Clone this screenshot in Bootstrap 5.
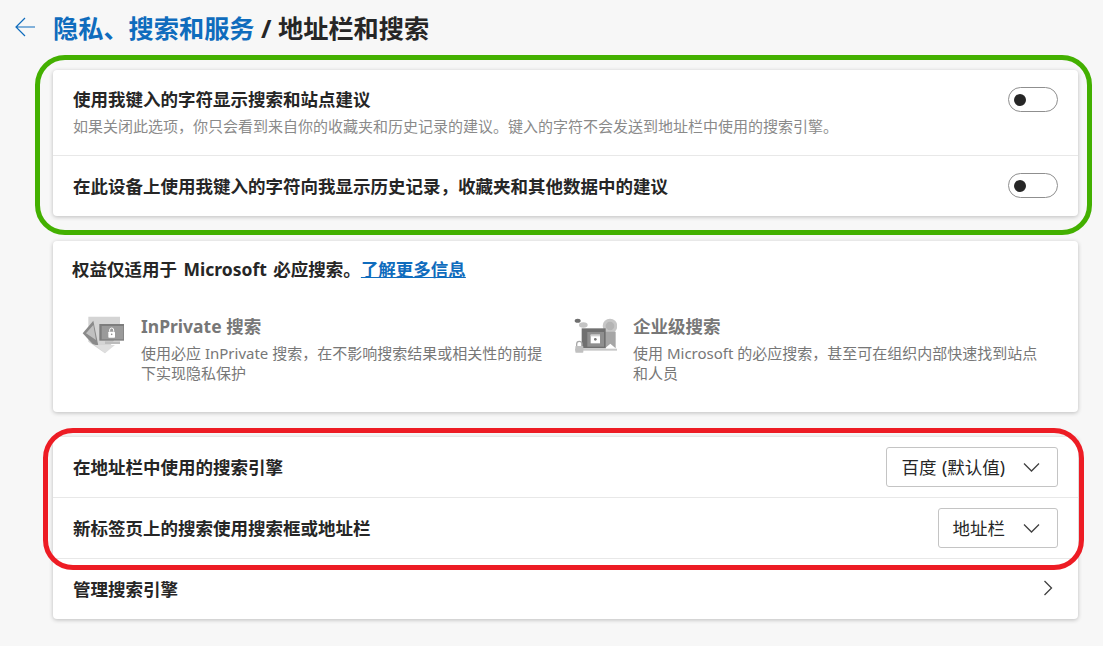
<!DOCTYPE html>
<html lang="zh-CN">
<head>
<meta charset="utf-8">
<title>地址栏和搜索</title>
<link href="https://cdn.jsdelivr.net/npm/bootstrap@5.3.0/dist/css/bootstrap.min.css" rel="stylesheet">
<style>
html,body{height:646px;overflow:hidden}
body{background:#f7f7f7;color:#262626;font-family:"Noto Sans","Noto Sans CJK SC",sans-serif;font-size:15px}
.stage{position:relative;width:1103px;height:646px;padding:0 25px 0 53px}
.head{height:56px;margin-left:-38px;gap:18px}
.head svg{margin-bottom:2px}
.head h1{font-size:25.2px;font-weight:700;line-height:32px;margin:0;color:#262626}
.head h1 a{color:#0f6cbd;text-decoration:none}
.sheet{background:#fff;border-radius:4px;box-shadow:0 1px 4px rgba(0,0,0,.24);width:1025px}
.s1{margin-top:14px;height:146px}
.s2{margin-top:25px;height:171px;padding:15px 19px 0}
.s3{margin-top:25px;height:182px}
.line{padding:0 20px;border-bottom:1px solid #e8e8e8}
.line:last-child{border-bottom:0}
.l1{height:86px;padding-top:16px;align-items:flex-start}
.l1 .tog{margin-top:1px}
.l2{height:60px}
.s1 .l2{padding-bottom:1px}
.l3{height:61px}
.ttl{font-size:17.5px;font-weight:700;line-height:26px}
.sub{font-size:15px;line-height:20px;color:#8a8a8a;margin-top:4px}
.tog{width:50px;height:25px;border:1px solid #8f8f8f;border-radius:13px;background:#fff;padding-left:5px}
.tog i{display:block;width:12px;height:12px;border-radius:50%;background:#262626}
.perk{font-size:17.5px;font-weight:700;line-height:26px;word-spacing:2px}
.perk a{color:#0f6cbd}
.feats{margin-top:32px}
.feat{width:492px;gap:16px;padding-left:8px;color:#777}
.feat svg{flex:none;margin-top:1px}
.feat b{display:block;font-size:17.5px;font-weight:700;line-height:24px;color:#777}
.feat p{font-size:15px;line-height:20px;margin:5px 0 0;color:#777;width:410px}
.pick{height:40px;border:1px solid #c4c4c4;border-radius:3px;background:#fff;font-size:17.5px;color:#262626;padding:0 17px 0 14px;gap:18px;word-spacing:1px}
.go{margin-right:5px;margin-top:-3px}
.ring{position:absolute;border-style:solid;pointer-events:none}
.ring-g{left:35px;top:55px;width:1057px;height:180px;border-width:5px;border-color:#43b000;border-radius:30px}
.ring-r{left:43px;top:428px;width:1041px;height:142px;border-width:5px;border-color:#ed1c24;border-radius:30px}
</style>
</head>
<body>
<div class="stage">
  <div class="head d-flex align-items-center">
    <svg width="20" height="20" viewBox="0 0 20 20" fill="none" stroke="#0f6cbd" stroke-width="1.200"><path d="M20 10H1M10 1 1 10l9 9"/></svg>
    <h1><a href="#">隐私、搜索和服务</a> / 地址栏和搜索</h1>
  </div>

  <div class="sheet s1">
    <div class="line l1 d-flex justify-content-between">
      <div><div class="ttl">使用我键入的字符显示搜索和站点建议</div><div class="sub">如果关闭此选项，你只会看到来自你的收藏夹和历史记录的建议。键入的字符不会发送到地址栏中使用的搜索引擎。</div></div>
      <div class="tog d-flex align-items-center"><i></i></div>
    </div>
    <div class="line l2 d-flex justify-content-between align-items-center">
      <div class="ttl">在此设备上使用我键入的字符向我显示历史记录，收藏夹和其他数据中的建议</div>
      <div class="tog d-flex align-items-center"><i></i></div>
    </div>
  </div>

  <div class="sheet s2">
    <div class="perk">权益仅适用于 Microsoft 必应搜索。<a href="#">了解更多信息</a></div>
    <div class="feats d-flex">
      <div class="feat d-flex">
        <svg width="45" height="40" viewBox="60 45 135 120"><path d="M85 50h95v45l-45 65-50-35z" fill="#d4d4d4"/><path d="M68 100 100 62l15 75-17-5z" fill="#8a8a8a"/><path d="M78 100 100 75l8 45z" fill="#c0c0c0"/><path d="M105 135h60l-30 25z" fill="#dedede"/><rect x="118" y="72" width="74" height="50" fill="#7d7d7d"/><rect x="125" y="78" width="65" height="40" fill="#9a9a9a"/><rect x="145" y="95" width="20" height="18" rx="2" fill="#fff"/><path d="M149 95v-5a6 6 0 0 1 12 0v5" fill="none" stroke="#fff" stroke-width="3"/><circle cx="155" cy="103" r="2.500" fill="#8a8a8a"/><rect x="135" y="124" width="45" height="8" fill="#bcbcbc"/></svg>
        <div><b>InPrivate 搜索</b><p>使用必应 InPrivate 搜索，在不影响搜索结果或相关性的前提下实现隐私保护</p></div>
      </div>
      <div class="feat d-flex">
        <svg width="45" height="40" viewBox="36 45 135 120"><ellipse cx="53" cy="62" rx="9" ry="6" fill="#6f6f6f"/><ellipse cx="70" cy="75" rx="13" ry="8" fill="#c4c4c4"/><circle cx="150" cy="78" r="22" fill="#c6c6c6"/><circle cx="150" cy="78" r="13" fill="#b4b4b4"/><path d="M135 95h32v50l-16-14-16 14z" fill="#a6a6a6"/><rect x="65" y="85" width="72" height="60" fill="#707070"/><rect x="82" y="96" width="50" height="44" fill="#8f8f8f"/><rect x="92" y="104" width="28" height="26" fill="#fff"/><rect x="92" y="104" width="28" height="5" fill="#d0d0d0"/><circle cx="106" cy="118" r="4" fill="#777"/><rect x="45" y="146" width="126" height="6" fill="#c8c8c8"/><rect x="46" y="138" width="24" height="20" rx="2" fill="#c0c0c0"/><path d="M50 138v-6a8 8 0 0 1 16 0v6" fill="none" stroke="#a8a8a8" stroke-width="4"/></svg>
        <div><b>企业级搜索</b><p>使用 Microsoft 的必应搜索，甚至可在组织内部快速找到站点和人员</p></div>
      </div>
    </div>
  </div>

  <div class="sheet s3">
    <div class="line l3 d-flex justify-content-between align-items-center">
      <div class="ttl">在地址栏中使用的搜索引擎</div>
      <div class="pick d-flex align-items-center">百度 (默认值)<svg width="17" height="10" viewBox="0 0 17 10" fill="none" stroke="#404040" stroke-width="1.300"><path d="M1 1.500 8.500 9 16 1.500"/></svg></div>
    </div>
    <div class="line l3 d-flex justify-content-between align-items-center">
      <div class="ttl">新标签页上的搜索使用搜索框或地址栏</div>
      <div class="pick d-flex align-items-center">地址栏<svg width="17" height="10" viewBox="0 0 17 10" fill="none" stroke="#404040" stroke-width="1.300"><path d="M1 1.500 8.500 9 16 1.500"/></svg></div>
    </div>
    <div class="line l2 d-flex justify-content-between align-items-center">
      <div class="ttl">管理搜索引擎</div>
      <svg class="go" width="10" height="16" viewBox="0 0 10 16" fill="none" stroke="#404040" stroke-width="1.300"><path d="M1.500 1 8.500 8 1.500 15"/></svg>
    </div>
  </div>

  <div class="ring ring-g"></div>
  <div class="ring ring-r"></div>
</div>
<script src="https://cdn.jsdelivr.net/npm/bootstrap@5.3.0/dist/js/bootstrap.bundle.min.js"></script>
</body>
</html>
